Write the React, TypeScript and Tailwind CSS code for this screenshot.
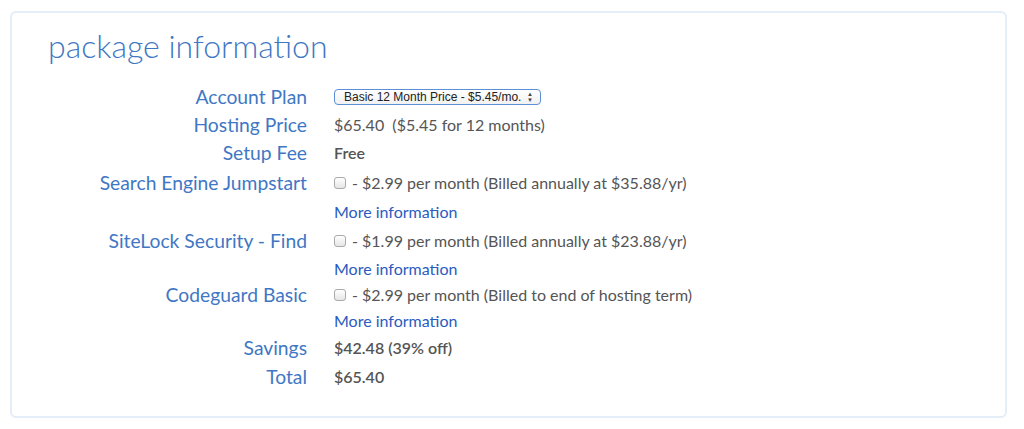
import React from "react";

const font = { fontFamily: "Lato, 'Open Sans', sans-serif" };

function Row({ h, label, children }: { h: string; label?: string; children: React.ReactNode }) {
  return (
    <div className={`grid grid-cols-[295px_1fr] gap-x-[27px] items-center ${h}`}>
      <div className="text-right text-[19.3px] text-[#3f77c4] leading-none">{label}</div>
      <div className="text-[16px] text-[#555] leading-none flex items-center">{children}</div>
    </div>
  );
}

function Check() {
  return (
    <span className="inline-block w-[12px] h-[12px] rounded-[3px] border border-[#aaa] bg-gradient-to-b from-[#fff] to-[#e6e6e6] mr-[6px]" />
  );
}

export default function App() {
  return (
    <div className="w-[1024px] h-[429px] bg-white pt-[11px] pl-[10px]" style={font}>
      <div className="w-[997px] h-[407px] border-2 border-[#e4eef9] rounded-[6px]">
        <div className="pl-[36px] pt-[13px] h-[70px] text-[32px] font-light text-[#3f77c4] leading-[40px]">package information</div>
        <Row h="h-[28px]" label="Account Plan">
          <span className="inline-flex items-center h-[16px] w-[207px] border border-[#5b8fd6] rounded-[4px] bg-gradient-to-b from-[#fff] to-[#f1f1f1] text-[12px] text-[#222] pl-[9px] pr-[7px] font-['Liberation_Sans',sans-serif] justify-between">
            <span>Basic 12 Month Price - $5.45/mo.</span>
            <span className="text-[6px] leading-[6px] flex flex-col text-[#444]"><span>▲</span><span>▼</span></span>
          </span>
        </Row>
        <Row h="h-[28px]" label="Hosting Price">$65.40&nbsp;&nbsp;($5.45 for 12 months)</Row>
        <Row h="h-[28px]" label="Setup Fee"><span className="font-semibold">Free</span></Row>
        <Row h="h-[31px]" label="Search Engine Jumpstart"><Check />- $2.99 per month (Billed annually at $35.88/yr)</Row>
        <Row h="h-[28px]"><span className="text-[#2b5bbf]">More information</span></Row>
        <Row h="h-[30px]" label="SiteLock Security - Find"><Check />- $1.99 per month (Billed annually at $23.88/yr)</Row>
        <Row h="h-[26px]"><span className="text-[#2b5bbf]">More information</span></Row>
        <Row h="h-[25px]" label="Codeguard Basic"><Check />- $2.99 per month (Billed to end of hosting term)</Row>
        <Row h="h-[27px]"><span className="text-[#2b5bbf]">More information</span></Row>
        <Row h="h-[27px]" label="Savings"><span className="font-semibold">$42.48 (39% off)</span></Row>
        <Row h="h-[32px]" label="Total"><span className="font-semibold">$65.40</span></Row>
      </div>
    </div>
  );
}
